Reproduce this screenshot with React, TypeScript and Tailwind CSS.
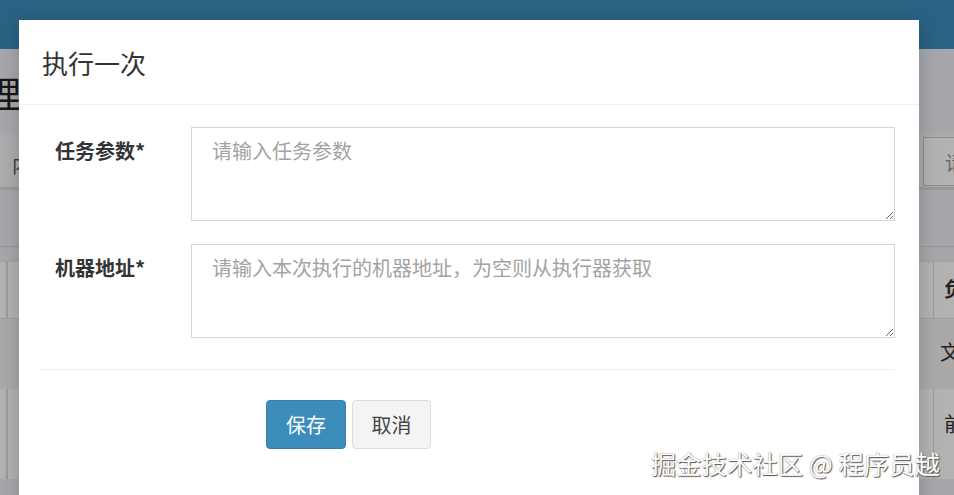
import React from 'react';

const cjk = { fontFamily: '"Noto Sans CJK SC", "Noto Sans", sans-serif' };

const Field = ({ label, placeholder }: { label: string; placeholder: string }) => (
  <div className="flex mb-[23px]">
    <label className="w-[151px] shrink-0 pl-[15px] pt-[10px] text-[20px] leading-[28px] font-bold text-[#333]">
      {label}
    </label>
    <textarea
      placeholder={placeholder}
      className="flex-1 h-[94px] border border-[#d2d6de] px-[20px] py-[9px] text-[20px] leading-[28px] text-[#555] placeholder:text-[#a3a3a3] outline-none resize-y bg-white"
      style={cjk}
    />
  </div>
);

export default function App() {
  return (
    <div className="relative w-[954px] h-[495px] overflow-hidden bg-[#ecf0f5]" style={cjk}>
      {/* page behind the dialog */}
      <div className="h-[49px] bg-[#3c8dbc]" />
      <div className="h-[86px] flex items-center">
        <span className="ml-[-15px] text-[36px] text-[#222]">理</span>
      </div>
      <div className="h-[55px] bg-[#f6f7f9] border-b-[3px] border-[#dcdcdc] flex items-start justify-between pt-[2px]">
        <span className="ml-[12px] mt-[13px] text-[20px] text-[#555]">内</span>
        <div className="w-[61px] mr-[-30px] h-[49px] bg-white border border-[#ccc] pl-[21px] pt-[10px] text-[20px] text-[#999]">请</div>
      </div>
      <div className="h-[57px] border-b border-[#d8d8d8]" />
      <div className="mt-[14px] bg-white">
        <div className="h-[58px] flex justify-between border-y border-[#e4e4e4]">
          <div className="ml-[6px] w-[2px] border-x border-[#ddd]" />
          <div className="w-[21px] border-l border-[#ddd] pl-[10px] pt-[12px] text-[20px] font-bold text-[#333]">负</div>
        </div>
        <div className="h-[70px] bg-[#f3f3f3] flex justify-end">
          <div className="w-[14px] pt-[18px] text-[20px] text-[#333]">文</div>
        </div>
        <div className="h-[90px] flex justify-between">
          <div className="ml-[6px] w-[2px] border-x border-[#ddd]" />
          <div className="w-[21px] border-l border-[#ddd] pl-[10px] pt-[20px] text-[20px] text-[#333]">前</div>
        </div>
      </div>

      {/* backdrop */}
      <div className="absolute inset-0 bg-black/30" />

      {/* modal */}
      <div className="absolute left-[19px] top-[20px] w-[900px] h-[520px] bg-white shadow-[0_4px_18px_rgba(0,0,0,0.2)]">
        <div className="h-[85px] border-b border-[#f0f0f0] px-[23px] flex items-center">
          <h4 className="text-[26px] leading-[37px] text-[#333] font-normal">执行一次</h4>
        </div>
        <div className="pl-[21px] pr-[24px] pt-[22px]">
          <Field label="任务参数*" placeholder="请输入任务参数" />
          <Field label="机器地址*" placeholder="请输入本次执行的机器地址，为空则从执行器获取" />
          <div className="mt-[31px] border-t border-[#eee]" />
          <div className="flex gap-[6px] pl-[226px] pt-[30px]">
            <button className="w-[80px] h-[49px] rounded-[4px] bg-[#3c8dbc] border border-[#367fa9] text-white text-[20px]">
              保存
            </button>
            <button className="w-[79px] h-[49px] rounded-[4px] bg-[#f4f4f4] border border-[#ddd] text-[#444] text-[20px]">
              取消
            </button>
          </div>
        </div>
      </div>

      {/* watermark */}
      <div className="absolute right-[14px] top-[446px] text-[25.4px] leading-[34px] text-white [text-shadow:1px_1px_1px_#555,0_0_1px_#777]">
        掘金技术社区 @ 程序员越
      </div>
    </div>
  );
}
